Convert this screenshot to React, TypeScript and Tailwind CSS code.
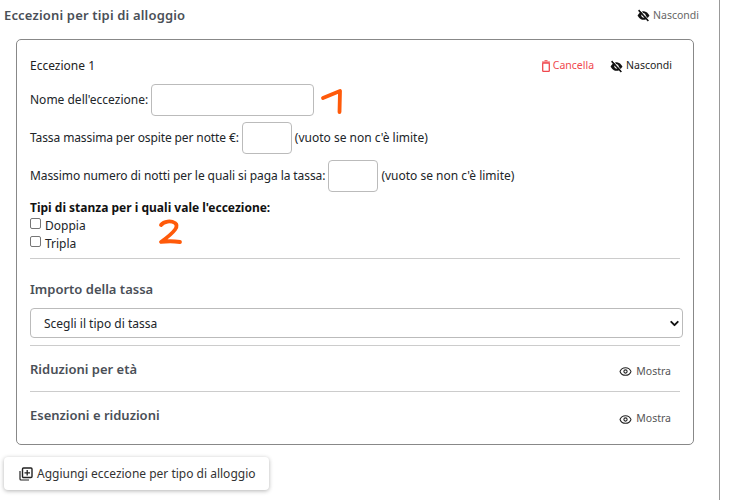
import { Eye, ChevronDown } from "lucide-react";

const font = { fontFamily: '"Noto Sans", sans-serif' };

const HideEye = ({ size = 14 }: { size?: number }) => (
  <svg width={size} height={size} viewBox="0 0 24 24" fill="none" className="shrink-0">
    <path d="M1 12s4-8 11-8 11 8 11 8-4 8-11 8-11-8-11-8z" fill="#111" />
    <circle cx="12" cy="12" r="4" fill="#fff" />
    <path d="M3 2l18 20" stroke="#111" strokeWidth="3" />
    <path d="M5.5 1.5l18 20" stroke="#fff" strokeWidth="1.5" />
  </svg>
);

const ShowToggle = () => (
  <span className="flex items-center gap-[4px] text-[10.5px] text-[#555]">
    <Eye size={13} strokeWidth={2} className="text-[#222]" />
    Mostra
  </span>
);

const Section = ({ title, last }: { title: string; last?: boolean }) => (
  <div className="flex h-[46px] items-center justify-between border-t border-[#ccc]">
    <span className="pt-[2px] text-[13px] font-semibold text-[#4a4f57]">{title}</span>
    <span className={`pr-[9px] ${last ? "pt-[9px]" : "pt-[6px]"}`}>
      <ShowToggle />
    </span>
  </div>
);

const SmallBox = () => (
  <input className="mx-[3px] h-[32px] w-[50px] rounded-[4px] border border-[#bbb] bg-white" />
);

const Check = ({ label }: { label: string }) => (
  <label className="flex h-[18px] items-center gap-[4px] text-[12px]">
    <input type="checkbox" className="-mt-[3px] h-[11px] w-[11px] appearance-none rounded-[2px] border border-[#767676] bg-white" />
    <span className="pt-[2px]">{label}</span>
  </label>
);

export default function App() {
  return (
    <div style={font} className="h-[500px] w-[720px] border-r border-[#999] bg-white text-[#212529]">
      <div className="flex h-[39px] items-start justify-between pl-[4px] pr-[20px] pt-[5px]">
        <h2 className="text-[13px] leading-[20px] font-semibold tracking-[0.17px] text-[#4a4f57]">Eccezioni per tipi di alloggio</h2>
        <span className="flex items-center gap-[3px] text-[10.5px] leading-[20px] text-[#666]">
          <HideEye size={13} />
          Nascondi
        </span>
      </div>

      <div className="ml-[16px] h-[406px] w-[678px] rounded-[5px] border border-[#888] px-[13px]">
        <div className="flex h-[44px] items-center justify-between pt-[8px] pr-[8px]">
          <span className="text-[12px] text-[#222]">Eccezione 1</span>
          <div className="flex items-center gap-[16px] text-[10.5px]">
            <span className="flex items-center gap-[3px] text-[#f0484e]">
              <svg width="8" height="12" viewBox="0 0 8 12" fill="none" className="shrink-0">
                <path d="M2.5.7h3M0 2h8" stroke="currentColor" />
                <rect x=".7" y="3" width="6.6" height="8.3" rx=".6" stroke="currentColor" strokeWidth="1.3" />
              </svg>
              Cancella
            </span>
            <span className="flex items-center gap-[3px] text-[#222]">
              <HideEye size={13} />
              Nascondi
            </span>
          </div>
        </div>

        <div className="flex h-[32px] items-center text-[12px]">
          <span>Nome dell'eccezione:</span>
          <input className="ml-[3px] h-[32px] w-[163px] rounded-[4px] border border-[#bbb] bg-white" />
          <svg width="26" height="28" viewBox="0 0 26 28" fill="none" className="ml-[6px]">
            <path d="M3 12 L20 5 L19.5 26" stroke="#ff5a0a" strokeWidth="3.8" strokeLinecap="round" strokeLinejoin="round" />
          </svg>
        </div>

        <div className="mt-[6px] flex h-[32px] items-center text-[12px]">
          <span className="tracking-[-0.11px]">Tassa massima per ospite per notte €:</span>
          <SmallBox />
          <span>(vuoto se non c'è limite)</span>
        </div>

        <div className="mt-[6px] flex h-[32px] items-center text-[12px]">
          <span className="tracking-[-0.08px]">Massimo numero di notti per le quali si paga la tassa:</span>
          <SmallBox />
          <span>(vuoto se non c'è limite)</span>
        </div>

        <div className="mt-[8px] text-[12px] leading-[16px] font-bold text-[#111]">Tipi di stanza per i quali vale l'eccezione:</div>

        <div className="relative">
          <Check label="Doppia" />
          <Check label="Tripla" />
          <svg width="26" height="30" viewBox="0 0 26 30" fill="none" className="absolute top-0 left-[128px]">
            <path d="M3 9 C6 5 13 4.500 17 7 C21 10 18 15 3 26 C9 25 15 25 22 26" stroke="#ff5a0a" strokeWidth="3.8" strokeLinecap="round" strokeLinejoin="round" />
          </svg>
        </div>

        <div className="mt-[6px] border-t border-[#ccc] pt-[20px] text-[13px] leading-[20px] font-semibold text-[#4a4f57]">Importo della tassa</div>

        <div className="relative mt-[9px]">
          <div className="flex h-[30px] w-[653px] items-center rounded-[4px] border border-[#bbb] pt-[2px] pl-[13px] text-[12px]">Scegli il tipo di tassa</div>
          <ChevronDown size={13} strokeWidth={3.5} className="absolute top-[9px] left-[638px] text-[#111]" />
        </div>

        <div className="mt-[7px]">
          <Section title="Riduzioni per età" />
          <Section title="Esenzioni e riduzioni" last />
        </div>
      </div>

      <button className="mt-[12px] ml-[4px] flex h-[33px] w-[265px] items-center gap-[4px] rounded-[4px] bg-white pl-[15px] text-[12px] text-[#333] shadow-[0_1px_4px_rgba(0,0,0,0.3)]">
        <svg width="14" height="14" viewBox="0 0 14 14" fill="none" className="shrink-0">
          <path d="M1 4v8a1 1 0 0 0 1 1h8" stroke="#222" strokeWidth="1.2" />
          <rect x="3.500" y="1" width="9.500" height="9.500" rx="1" stroke="#222" strokeWidth="1.400" />
          <path d="M8.200 3v5.500M5.500 5.800h5.500" stroke="#222" strokeWidth="1.300" />
        </svg>
        Aggiungi eccezione per tipo di alloggio
      </button>
    </div>
  );
}
